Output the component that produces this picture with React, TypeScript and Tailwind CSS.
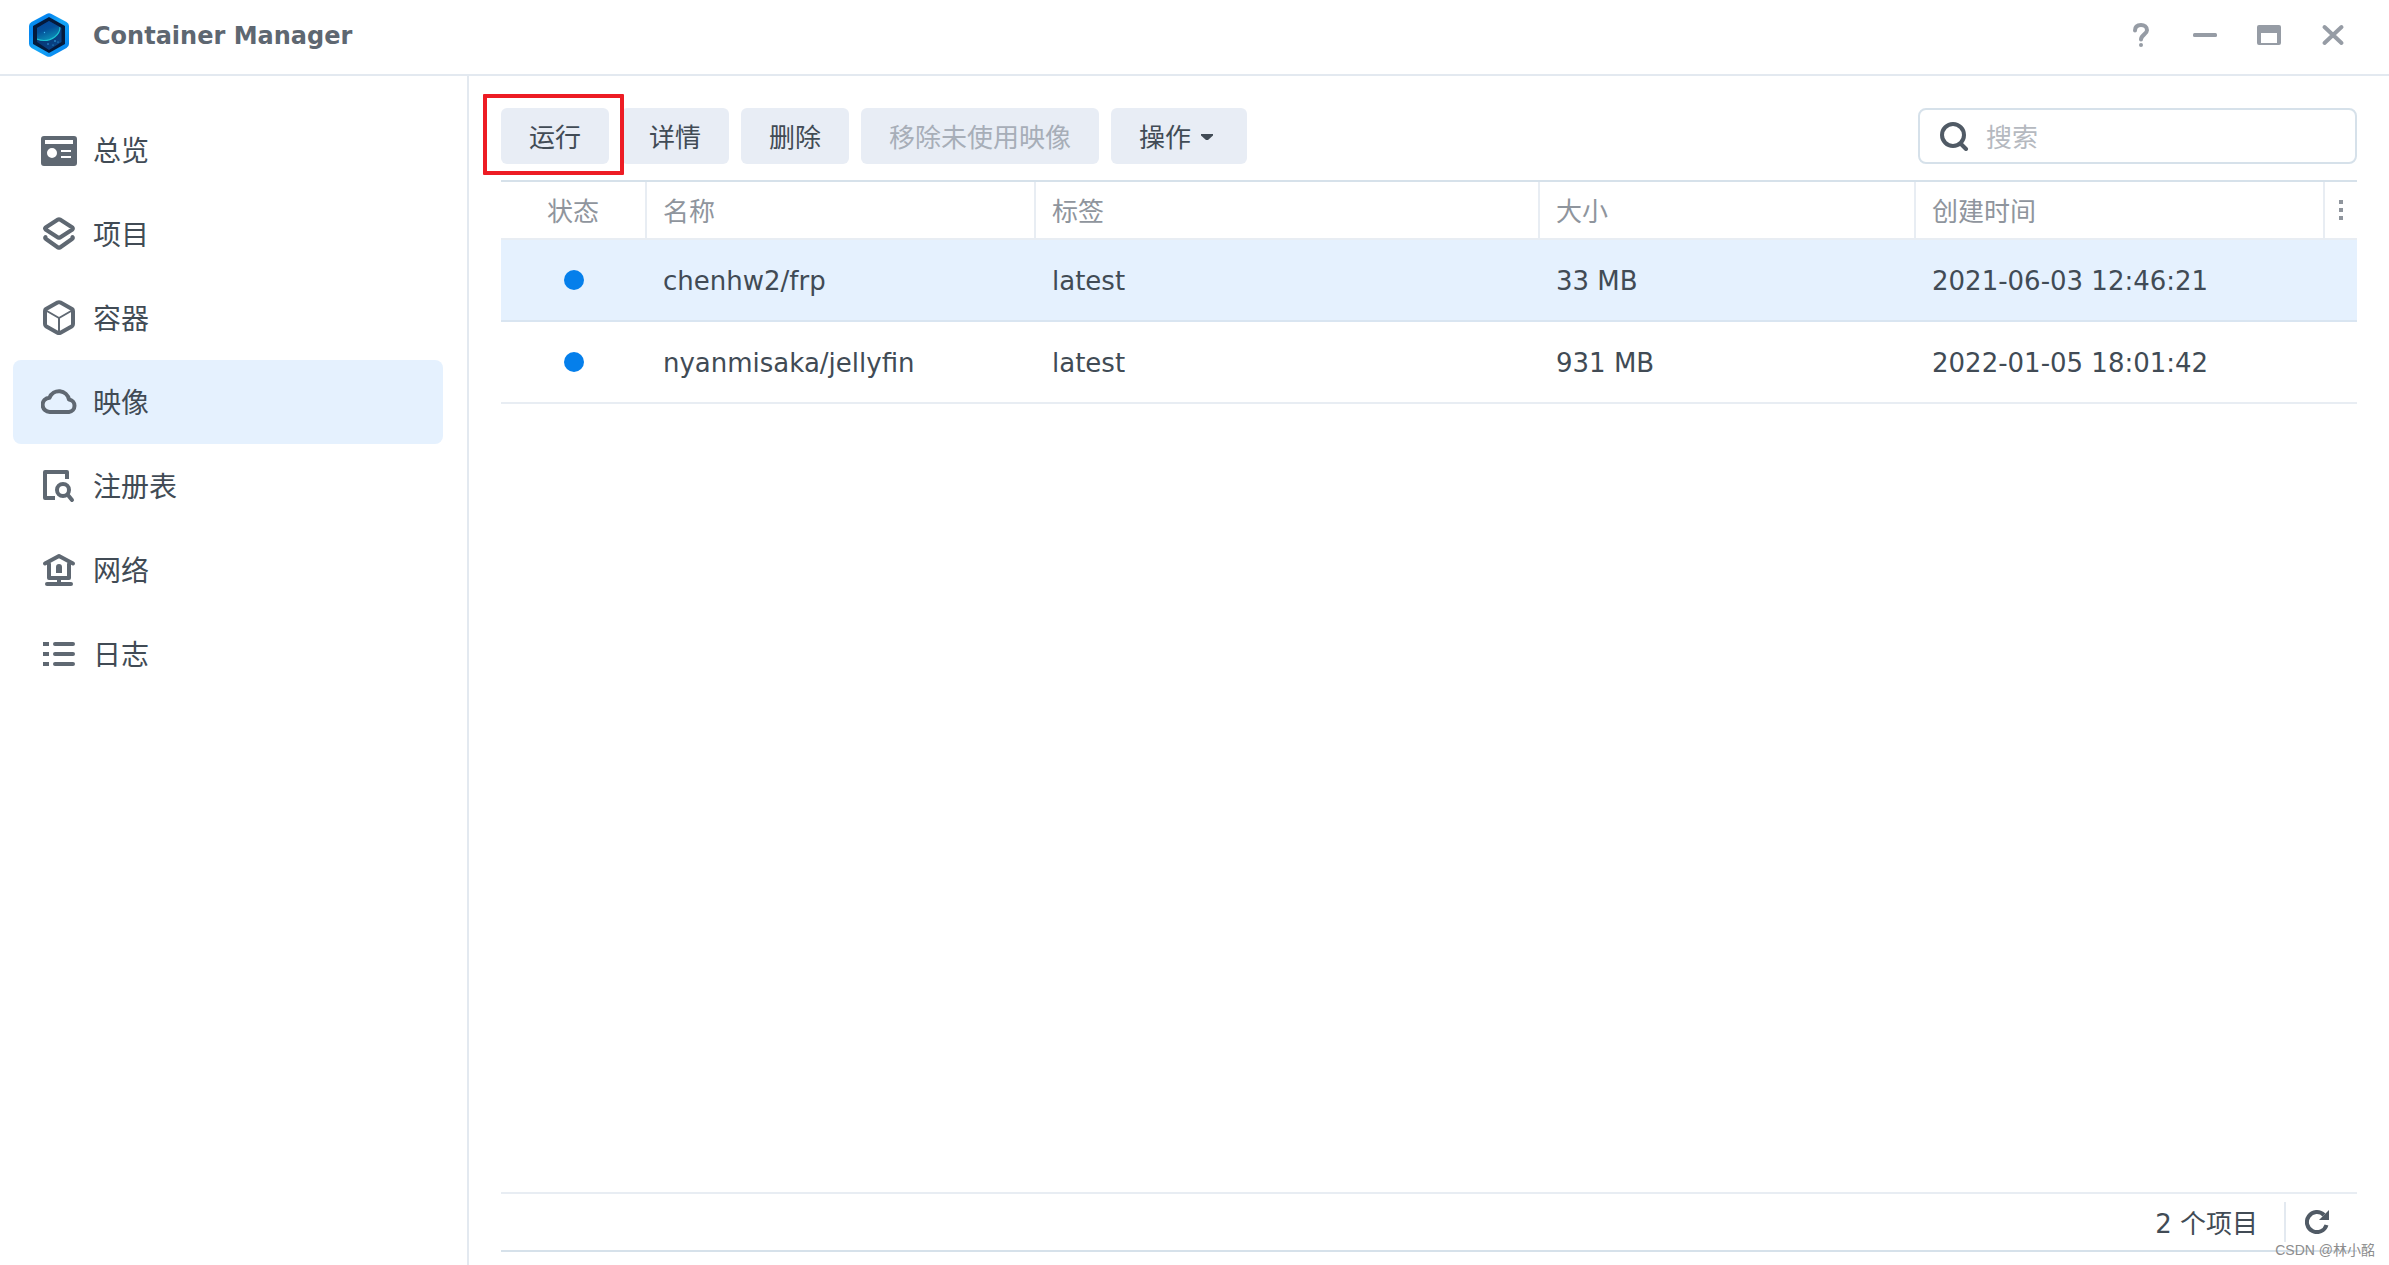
import { useState } from "react";
import type { ReactNode } from "react";

type NavItem = { label: string; icon: ReactNode };

const navItems: NavItem[] = [
  {
    label: "总览",
    icon: (
      <path
        fill="currentColor"
        fillRule="evenodd"
        d="M3 4h30a3 3 0 0 1 3 3v24a3 3 0 0 1-3 3H3a3 3 0 0 1-3-3V7a3 3 0 0 1 3-3ZM4 8v4h28V8ZM11 16a5 5 0 1 0 0 10a5 5 0 0 0 0-10ZM20 18v2h10v-2ZM20 24v2h10v-2Z"
      />
    ),
  },
  {
    label: "项目",
    icon: (
      <g fill="none" stroke="currentColor" strokeWidth="4" strokeLinejoin="round" strokeLinecap="round">
        <path d="M17 3.5q1-.6 2 0l12.400 8q1 1 0 2l-12.400 8q-1 .6-2 0l-12.400-8q-1-1 0-2Z" />
        <path d="M4.500 21q-1 1 .5 2l12 8.500q1 .6 2 0l12-8.500q1.500-1 .5-2" />
      </g>
    ),
  },
  {
    label: "容器",
    icon: (
      <g fill="none" stroke="currentColor" strokeLinejoin="round">
        <path strokeWidth="4" d="M16.500 2.600q1.500-.8 3 0L31 9q1 .7 1 2v13q0 1.400-1 2.200l-11.500 6.500q-1.500.8-3 0L5 26.200Q4 25.400 4 24V11q0-1.300 1-2Z" />
        <path strokeWidth="2" d="M5 10.500l13 7.500l13-7.500M18 18v14" />
      </g>
    ),
  },
  {
    label: "映像",
    icon: (
      <path
        fill="none"
        stroke="currentColor"
        strokeWidth="4"
        strokeLinejoin="round"
        d="M9 28a7 7 0 0 1-.5-14.300A10.200 10.200 0 0 1 28 15.500A6.300 6.300 0 0 1 28 28Z"
      />
    ),
  },
  {
    label: "注册表",
    icon: (
      <g fill="none" stroke="currentColor" strokeWidth="4">
        <path strokeLinejoin="round" d="M26 11V4H4v26h10" />
        <circle cx="22" cy="22" r="6" />
        <path strokeLinecap="round" d="M26.500 26.500L31 32" />
      </g>
    ),
  },
  {
    label: "网络",
    icon: (
      <>
        <g fill="none" stroke="currentColor" strokeWidth="4" strokeLinejoin="round" strokeLinecap="round">
          <path d="M4 11.500L18 4l14 7.500" />
          <path d="M8 12v14h20V12" />
          <path d="M6 32h24" />
        </g>
        <path fill="currentColor" d="M15 21v-6a3 3 0 0 1 6 0v6ZM16 27h4v4h-4Z" />
      </>
    ),
  },
  {
    label: "日志",
    icon: (
      <>
        <path fill="currentColor" d="M2 6h6v4H2ZM2 16h6v4H2ZM2 26h6v4H2Z" />
        <path stroke="currentColor" strokeWidth="4" strokeLinecap="round" d="M14 8h18M14 18h18M14 28h18" />
      </>
    ),
  },
];

const windowControls: NavItem[] = [
  {
    label: "帮助",
    icon: (
      <>
        <path
          fill="none"
          stroke="currentColor"
          strokeWidth="4"
          strokeLinecap="round"
          d="M6 7.500C6 3.500 8.700 2 12 2s6 1.800 6 5.200c0 3.900-6 4.600-6 9.400"
        />
        <circle cx="12" cy="22" r="2" fill="currentColor" />
      </>
    ),
  },
  {
    label: "最小化",
    icon: <rect y="10" width="24" height="4" rx="1.500" fill="currentColor" />,
  },
  {
    label: "最大化",
    icon: (
      <path
        fill="currentColor"
        fillRule="evenodd"
        d="M2 2h20a2 2 0 0 1 2 2v16a2 2 0 0 1-2 2H2a2 2 0 0 1-2-2V4a2 2 0 0 1 2-2ZM4 10v10h16V10Z"
      />
    ),
  },
  {
    label: "关闭",
    icon: <path stroke="currentColor" strokeWidth="4" strokeLinecap="round" d="M3.500 4l17 16M20.500 4l-17 16" />,
  },
];

const images = [
  { name: "chenhw2/frp", tag: "latest", size: "33 MB", created: "2021-06-03 12:46:21" },
  { name: "nyanmisaka/jellyfin", tag: "latest", size: "931 MB", created: "2022-01-05 18:01:42" },
];

const toolButton = "h-14 rounded-md bg-[#e8edf5] px-7 pt-[3px] text-[#414b55]";
const headCell = "h-[60px] border-y-2 border-t-[#d6e1ea] border-b-[#e8edf3] p-0 text-left font-normal";
const headLabel = "flex h-14 items-center border-r-2 border-[#e8edf3] pt-[3px] pl-4";
const bodyCell = "p-0 pt-0.5 pl-4";

function Logo() {
  return (
    <svg viewBox="0 0 40 44" className="h-11 w-10 shrink-0" aria-hidden="true">
      <defs>
        <linearGradient id="rim" x1="0" y1="0" x2="1" y2="1">
          <stop offset="0" stopColor="#0aa2f5" />
          <stop offset="0.25" stopColor="#0584f0" />
          <stop offset="0.5" stopColor="#16a8f7" />
          <stop offset="0.8" stopColor="#0a8df2" />
          <stop offset="1" stopColor="#0878e0" />
        </linearGradient>
        <linearGradient id="planet" x1="0.3" y1="0" x2="0.7" y2="1">
          <stop offset="0" stopColor="#033a9c" />
          <stop offset="0.6" stopColor="#04509a" />
          <stop offset="1" stopColor="#0d93b8" />
        </linearGradient>
        <linearGradient id="space" x1="0" y1="0" x2="1" y2="1">
          <stop offset="0" stopColor="#04245c" />
          <stop offset="1" stopColor="#0a4f96" />
        </linearGradient>
        <clipPath id="inner">
          <path d="M20 8L32.500 15v14L20 37L8 29V15Z" />
        </clipPath>
      </defs>
      <path
        fill="url(#rim)"
        d="M17.500 .9q2.500-1.300 5 0l15 8.200Q40 10.500 40 13v18q0 2.500-2.500 3.900l-15 8.300q-2.500 1.300-5 0l-15-8.300Q0 33.500 0 31V13q0-2.500 2.500-3.900Z"
      />
      <path fill="#041a3c" d="M20 4L36 13v18L20 40L4 31V13Z" />
      <g clipPath="url(#inner)">
        <path fill="url(#space)" d="M0 0h40v44H0Z" />
        <path fill="url(#planet)" d="M0 0h31v14c0 8-8 13.500-16 13.500c-3 0-5-.5-7-1.500Z" />
        <path fill="none" stroke="#1cc2d2" strokeWidth="1.200" d="M31 14c0 8-8 13.500-16 13.500c-3 0-5-.5-7-1.500" />
        <g fill="#3bb4f0">
          <circle cx="15.500" cy="19.500" r=".7" />
          <circle cx="26" cy="28" r=".8" />
          <circle cx="19" cy="31" r=".7" />
          <circle cx="29" cy="29" r=".6" />
          <circle cx="24" cy="32" r=".6" />
        </g>
      </g>
    </svg>
  );
}

export default function App() {
  const [activeNav, setActiveNav] = useState("映像");
  const [selected, setSelected] = useState("chenhw2/frp");
  const [query, setQuery] = useState("");

  const rows = images.filter((image) => image.name.includes(query));

  return (
    <div className="flex min-h-screen flex-col bg-white font-['DejaVu_Sans','Noto_Sans_CJK_SC',sans-serif] text-[26px] leading-9 text-[#414b55]">
      {/* TITLE BAR */}
      <header className="flex h-[76px] items-center border-b-2 border-[#e3e9f0] pr-6 pb-1 pl-[29px]">
        <Logo />
        <h1 className="ml-6 grow pt-0.5 text-2xl font-bold text-[#5e6771]">Container Manager</h1>
        {windowControls.map((control) => (
          <button
            key={control.label}
            aria-label={control.label}
            className="flex h-14 w-16 items-center justify-center text-[#969ca5]"
          >
            <svg viewBox="0 0 24 24" className="size-6">
              {control.icon}
            </svg>
          </button>
        ))}
      </header>

      <div className="flex grow">
        {/* SIDEBAR */}
        <nav className="w-[469px] shrink-0 border-r-2 border-[#e3e9f0] pt-8 pr-6 pl-[13px]">
          {navItems.map((item) => (
            <button
              key={item.label}
              onClick={() => setActiveNav(item.label)}
              className={`flex h-[84px] w-full items-center gap-4 rounded-lg pl-7 text-[28px] ${
                activeNav === item.label ? "bg-[#e5f1fe]" : ""
              }`}
            >
              <svg viewBox="0 0 36 36" className="size-9 text-[#5f6872]">
                {item.icon}
              </svg>
              <span className="pt-1">{item.label}</span>
            </button>
          ))}
        </nav>

        {/* IMAGE LIST */}
        <main className="flex min-w-0 grow flex-col px-8 pt-8 pb-[13px]">
          <div className="mb-4 flex gap-3">
            <div className="relative">
              <button className={toolButton}>运行</button>
              <div className="pointer-events-none absolute -top-[14px] -right-[15px] -bottom-[11px] -left-[18px] rounded-[1px] border-4 border-[#ed1c24]" />
            </div>
            <button className={toolButton}>详情</button>
            <button className={toolButton}>删除</button>
            <button disabled className="h-14 rounded-md bg-[#e8edf5] px-7 pt-[3px] text-[#a7aeb8]">
              移除未使用映像
            </button>
            <button className="flex h-14 items-center gap-1 rounded-md bg-[#e8edf5] px-7">
              <span className="pt-[3px]">操作</span>
              <svg viewBox="0 0 24 24" className="size-6" aria-hidden="true">
                <path fill="currentColor" d="M6 10h12v1.500L13 16h-2l-5-4.500Z" />
              </svg>
            </button>
            <label className="ml-auto flex h-14 w-[439px] items-center gap-4 rounded-lg border-2 border-[#d6e1ea] pl-5">
              <svg viewBox="0 0 30 30" className="size-[30px] shrink-0" fill="none" stroke="#505a65" strokeWidth="4">
                <circle cx="13" cy="14" r="11" />
                <path strokeLinecap="round" d="M21 23L26 28" />
              </svg>
              <input
                aria-label="搜索"
                placeholder="搜索"
                value={query}
                onChange={(e) => setQuery(e.target.value)}
                className="w-full min-w-0 pt-[3px] outline-none placeholder:text-[#b5b9bf]"
              />
            </label>
          </div>

          <table className="w-full table-fixed border-separate border-spacing-0">
            <colgroup>
              <col className="w-[146px]" />
              <col className="w-[389px]" />
              <col />
              <col className="w-[376px]" />
              <col className="w-[409px]" />
              <col className="w-8" />
            </colgroup>
            <thead className="text-[#8f959d]">
              <tr>
                <th className={headCell}>
                  <div className="flex h-14 items-center justify-center border-r-2 border-[#e8edf3] pt-[3px]">状态</div>
                </th>
                <th className={headCell}>
                  <div className={headLabel}>名称</div>
                </th>
                <th className={headCell}>
                  <div className={headLabel}>标签</div>
                </th>
                <th className={headCell}>
                  <div className={headLabel}>大小</div>
                </th>
                <th className={headCell}>
                  <div className={headLabel}>创建时间</div>
                </th>
                <th className={headCell}>
                  <button aria-label="列" className="flex h-14 w-full items-center justify-center">
                    <svg viewBox="0 0 4 20" className="h-5 w-1" fill="currentColor">
                      <path d="M0 0h4v4H0ZM0 8h4v4H0ZM0 16h4v4H0Z" />
                    </svg>
                  </button>
                </th>
              </tr>
            </thead>
            <tbody>
              {rows.map((image) => (
                <tr
                  key={image.name}
                  onClick={() => setSelected(image.name)}
                  className={
                    selected === image.name
                      ? "bg-[#e5f1fe] *:border-b-2 *:border-[#d9e5f1]"
                      : "*:border-b-2 *:border-[#e8edf3]"
                  }
                >
                  <td className="h-[82px] p-0">
                    <div className="mx-auto size-5 rounded-full bg-[#057feb]" />
                  </td>
                  <td className={bodyCell}>{image.name}</td>
                  <td className={bodyCell}>{image.tag}</td>
                  <td className={bodyCell}>{image.size}</td>
                  <td className={bodyCell}>{image.created}</td>
                  <td className="p-0" />
                </tr>
              ))}
            </tbody>
          </table>

          <footer className="relative mt-auto flex h-[60px] items-center justify-end border-y-2 border-t-[#e8edf3] border-b-[#d6e1ea]">
            <span className="pt-[3px] pr-[26px]">{rows.length} 个项目</span>
            <button aria-label="刷新" className="flex h-10 items-center border-l-2 border-[#e3e9f0] pr-7 pl-[19px]">
              <svg viewBox="0 0 24 24" className="size-6 text-[#505a65]">
                <path fill="none" stroke="currentColor" strokeWidth="4" d="M21.500 15A10 10 0 1 1 19 5" />
                <path fill="currentColor" d="M24 0v10H14Z" />
              </svg>
            </button>
            <span className="absolute -right-[18px] -bottom-3 font-['Liberation_Sans','Noto_Sans_CJK_SC',sans-serif] text-sm leading-6 text-[#8d8d8d]">
              CSDN @林小酩
            </span>
          </footer>
        </main>
      </div>
    </div>
  );
}
